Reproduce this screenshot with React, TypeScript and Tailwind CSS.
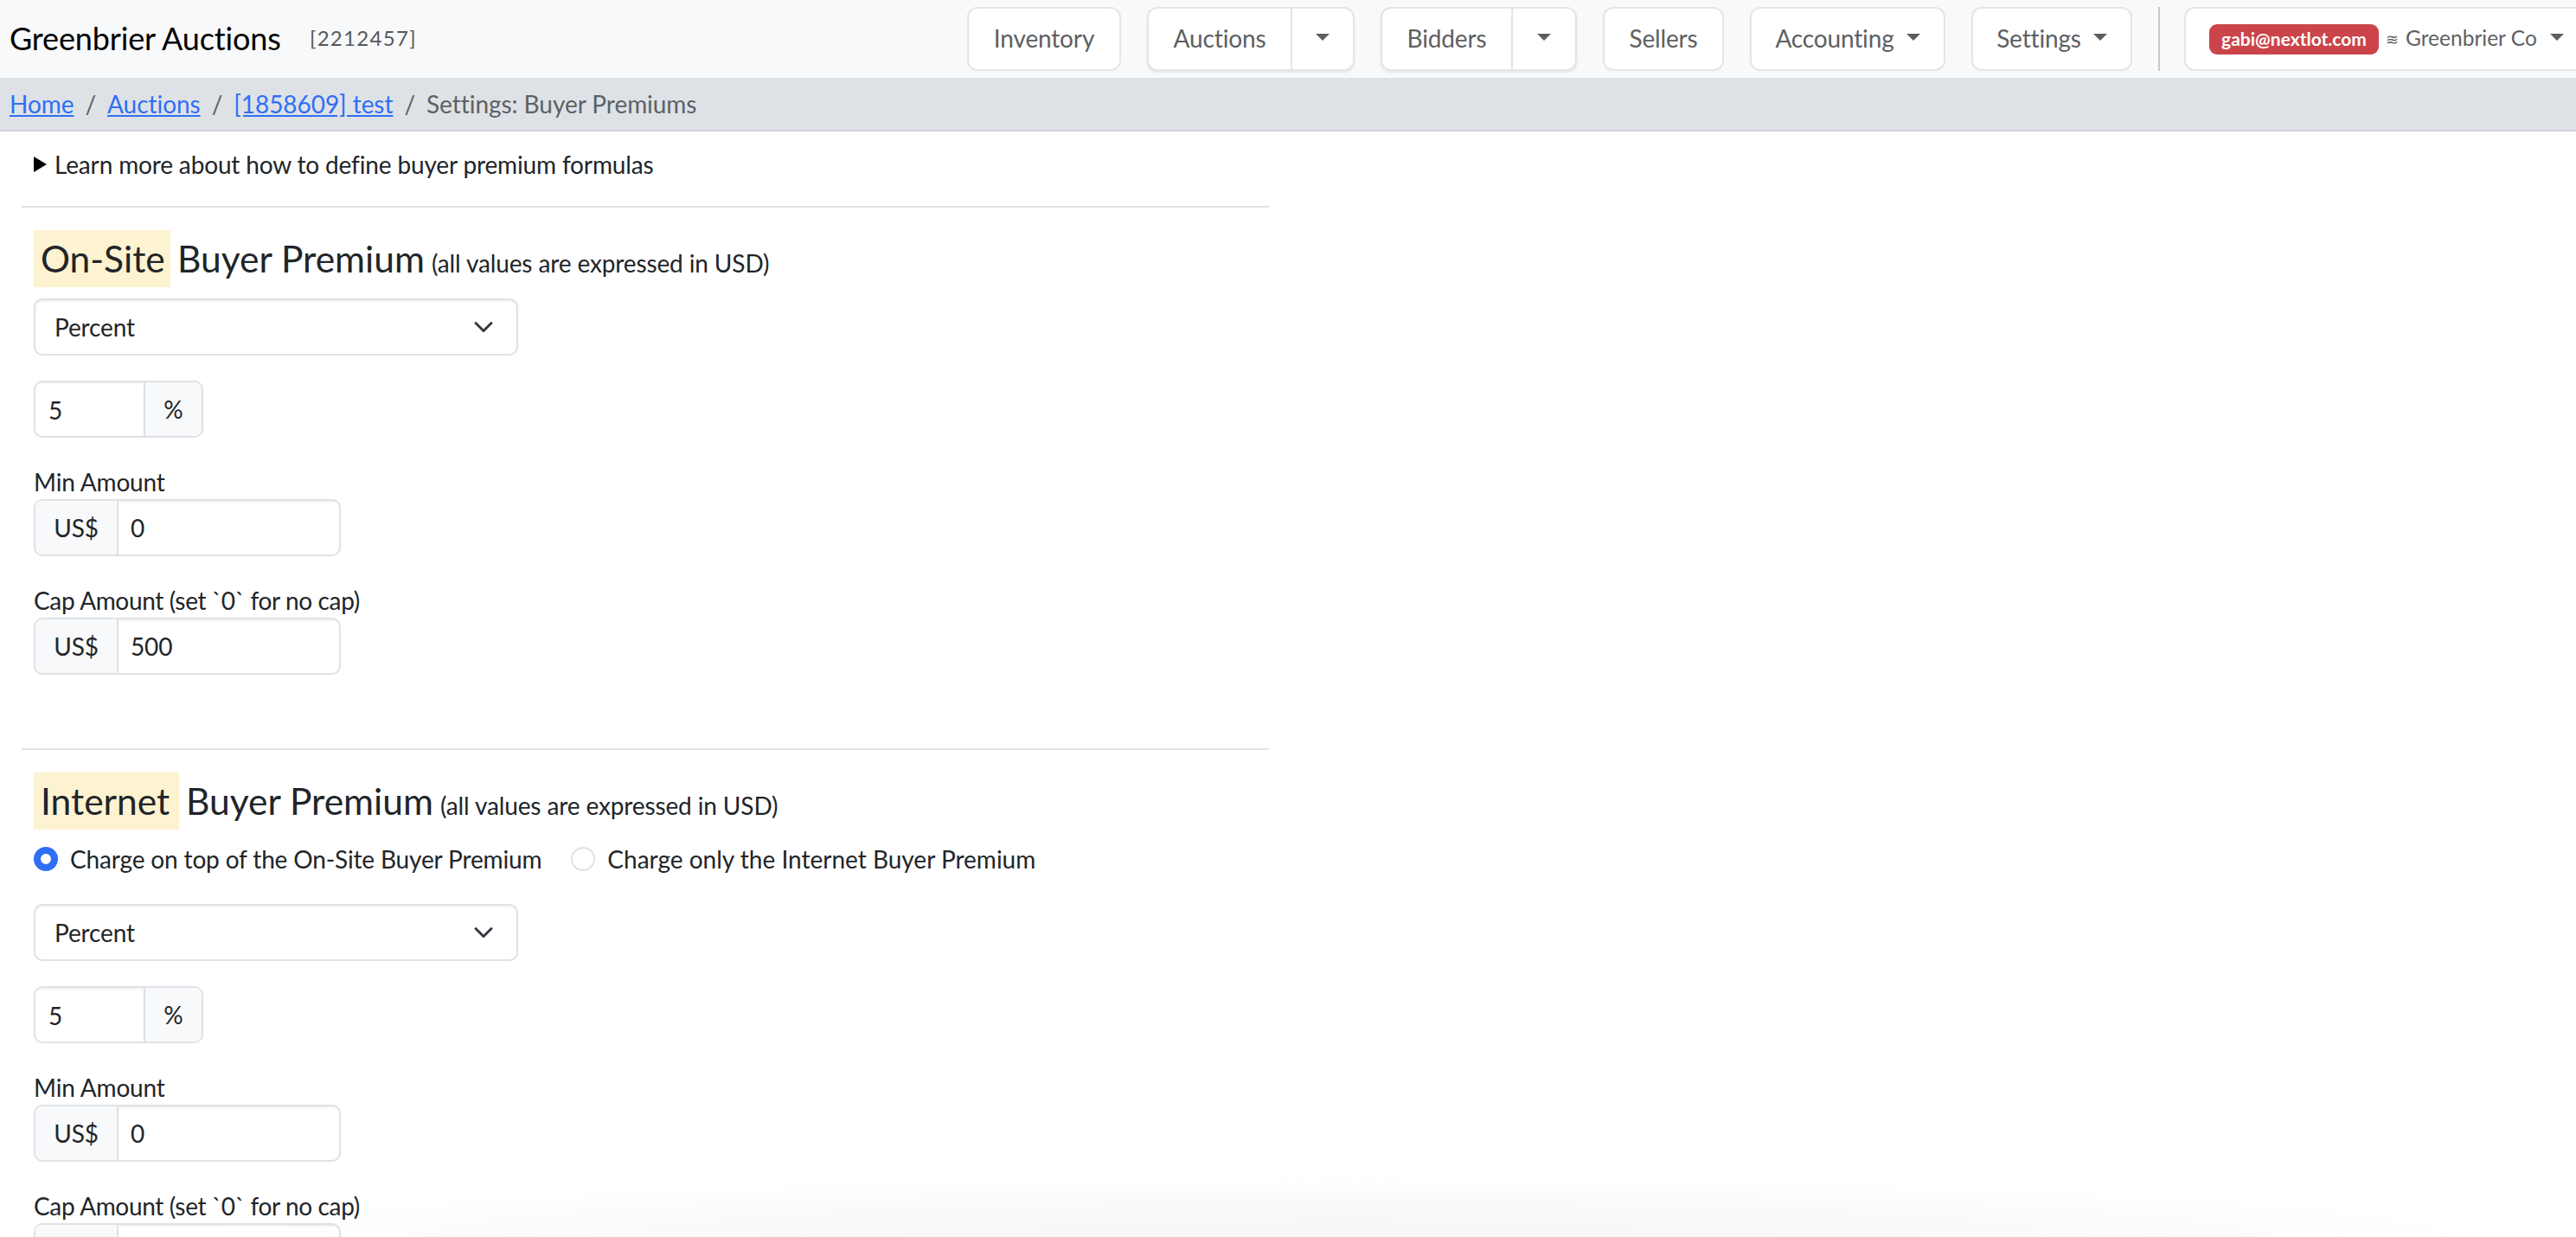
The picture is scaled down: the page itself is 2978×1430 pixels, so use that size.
const lato = "font-['Lato','Noto_Sans',sans-serif]";

function Caret() {
  return <span className="inline-block w-0 h-0 border-x-[8px] border-x-transparent border-t-[8px] border-t-[#5c5f62]" />;
}

function NavButton({ w, children, caret }: { w: string; children: React.ReactNode; caret?: boolean }) {
  return (
    <div className={`h-[74px] ${w} flex items-center justify-center gap-[14px] bg-white border-2 border-[#e3e5e7] rounded-[12px] text-[#5c5f62] text-[28px]`}>
      <span className="relative -top-[1px]">{children}</span>
      {caret && <span className="relative -top-[2px] flex"><Caret /></span>}
    </div>
  );
}

function SplitButton({ w, main, label }: { w: string; main: string; label: string }) {
  return (
    <div className={`h-[74px] ${w} flex bg-white border-2 border-[#e3e5e7] rounded-[12px] text-[#5c5f62] text-[28px] shadow-[0_2px_3px_rgba(0,0,0,0.08)]`}>
      <div className={`${main} flex items-center justify-center border-r-2 border-[#e3e5e7]`}><span className="relative -top-[1px]">{label}</span></div>
      <div className="flex-1 flex items-center justify-center"><span className="relative -top-[2px] flex"><Caret /></span></div>
    </div>
  );
}

function Select() {
  return (
    <div className="w-[560px] h-[66px] flex items-center justify-between pl-[22px] pr-[26px] border-2 border-[#dee2e6] rounded-[10px] bg-white shadow-[inset_0_2px_2px_rgba(0,0,0,0.05)]">
      <span>Percent</span>
      <svg width="24" height="24" viewBox="0 0 16 16" fill="none" stroke="#343a40" strokeWidth="2" strokeLinecap="round" strokeLinejoin="round"><path d="M2 5l6 6 6-6" /></svg>
    </div>
  );
}

function PercentGroup() {
  return (
    <div className="w-[196px] h-[66px] flex border-2 border-[#dee2e6] rounded-[10px] overflow-hidden">
      <div className="w-[127px] flex items-center pl-[15px] pt-[1px] border-r-2 border-[#dee2e6] shadow-[inset_0_2px_2px_rgba(0,0,0,0.05)]">5</div>
      <div className="flex-1 flex items-center justify-center bg-[#f8f9fa]">%</div>
    </div>
  );
}

function MoneyGroup({ value }: { value: string }) {
  return (
    <div className="w-[355px] h-[66px] flex border-2 border-[#dee2e6] rounded-[10px] overflow-hidden">
      <div className="w-[96px] flex items-center justify-center border-r-2 border-[#dee2e6] bg-[#f8f9fa]">US$</div>
      <div className="flex-1 flex items-center pl-[14px] shadow-[inset_0_2px_2px_rgba(0,0,0,0.05)]">{value}</div>
    </div>
  );
}

function Heading({ tag, tagClass }: { tag: string; tagClass: string }) {
  return (
    <div className="flex items-baseline h-[66px] whitespace-nowrap tracking-normal">
      <span className={`bg-[#fdf3d1] pl-[8px] h-[66px] flex items-center text-[42.5px] ${tagClass}`}>{tag}</span>
      <span className="text-[42.5px] ml-[8px]">Buyer Premium</span>
      <span className="text-[28px] ml-[8px] tracking-[-0.12px]">(all values are expressed in USD)</span>
    </div>
  );
}

function Amounts() {
  return (
    <>
      <div className="mt-[29px]"><PercentGroup /></div>
      <div className="mt-[32px] leading-[38px] h-[39px]">Min Amount</div>
      <MoneyGroup value="0" />
      <div className="mt-[32px] leading-[38px] h-[39px] tracking-[-0.35px]">Cap Amount (set `0` for no cap)</div>
      <MoneyGroup value="500" />
    </>
  );
}

export default function App() {
  return (
    <div className={`relative h-[1430px] overflow-hidden bg-white text-[#212529] text-[28px] tracking-[-0.15px] ${lato}`}>
      <nav className="h-[90px] bg-[#f8f9fa] flex items-center pl-[11px]">
        <span className="text-[36px] text-black w-[347px] relative -top-[1px]">Greenbrier Auctions</span>
        <span className="text-[24px] text-[#55585b] tracking-[1.3px] relative -top-[1px]">[2212457]</span>
        <div className="flex-1" />
        <div className="flex items-center gap-[30px] mr-[-30px] w-[1890px] h-[74px] shrink-0">
          <NavButton w="w-[178px]">Inventory</NavButton>
          <SplitButton w="w-[240px]" main="w-[166px]" label="Auctions" />
          <SplitButton w="w-[227px]" main="w-[151px]" label="Bidders" />
          <NavButton w="w-[140px]">Sellers</NavButton>
          <NavButton w="w-[226px]" caret>Accounting</NavButton>
          <NavButton w="w-[186px]" caret>Settings</NavButton>
          <div className="w-[2px] h-[74px] bg-[#c6c8ca] mr-[-2px]" />
          <div className="h-[74px] flex-1 flex items-center pl-[27px] bg-white border-2 border-[#e3e5e7] rounded-[12px] text-[#5c5f62] text-[24.5px] tracking-normal whitespace-nowrap">
            <span className="h-[35px] w-[196px] shrink-0 rounded-[9px] bg-[#cb444a] text-white font-bold text-[21px] flex items-center justify-center">gabi@nextlot.com</span>
            <span className="ml-[8px] text-[18px] w-[14px] font-['DejaVu_Sans',sans-serif]">≋</span>
            <span className="ml-[9px] relative -top-[1px]">Greenbrier Co</span>
            <span className="ml-[15px] relative -top-[2px] flex"><Caret /></span>
          </div>
        </div>
      </nav>
      <div className="h-[62px] bg-[#dee2e6] border-b-2 border-[#d0d4d9] flex items-center pl-[11px] pb-[1px] text-[#5c6166] gap-[13px] tracking-[-0.05px]">
        <a className="text-[#2f6ff5] underline">Home</a><span>/</span>
        <a className="text-[#2f6ff5] underline">Auctions</a><span>/</span>
        <a className="text-[#2f6ff5] underline">[1858609] test</a><span>/</span>
        <span>Settings: Buyer Premiums</span>
      </div>
      <main className="pl-[25px] w-[1467px]">
        <div className="pl-[14px] h-[86px] pb-[11px] flex items-center gap-[9px] text-[#212529]">
          <span className="w-0 h-0 border-y-[9px] border-y-transparent border-l-[15px] border-l-black" />
          <span>Learn more about how to define buyer premium formulas</span>
        </div>
        <div className="h-[2px] bg-[#dee2e6]" />
        <div className="pl-[14px]">
          <div className="mt-[26px]"><Heading tag="On-Site" tagClass="w-[158px]" /></div>
          <div className="mt-[13px]"><Select /></div>
          <Amounts />
        </div>
        <div className="h-[2px] bg-[#dee2e6] mt-[85px]" />
        <div className="pl-[14px]">
          <div className="mt-[26px]"><Heading tag="Internet" tagClass="w-[168px]" /></div>
          <div className="mt-[17px] h-[34px] flex items-center">
            <span className="w-[28px] h-[28px] rounded-full bg-white border-[8px] border-[#2f6ff5]" />
            <span className="ml-[14px]">Charge on top of the On-Site Buyer Premium</span>
            <span className="ml-[34px] w-[28px] h-[28px] rounded-full bg-white border-2 border-[#dee2e6]" />
            <span className="ml-[14px] tracking-normal">Charge only the Internet Buyer Premium</span>
          </div>
          <div className="mt-[35px]"><Select /></div>
          <Amounts />
        </div>
      </main>
      <div className="absolute left-[200px] w-[2700px] bottom-0 h-[70px] bg-[radial-gradient(ellipse_50%_100%_at_50%_100%,rgba(0,0,0,0.035),rgba(0,0,0,0.02)_60%,transparent)]" />
    </div>
  );
}
